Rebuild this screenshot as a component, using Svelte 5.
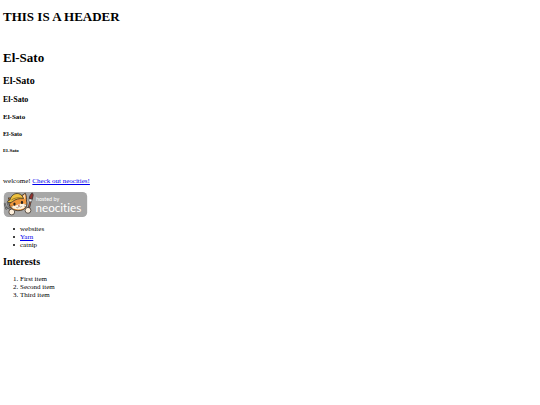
<script>
  const welcome = "welcome!";

  const likes = [
    { text: "websites" },
    { text: "Yarn", href: "#yarn" },
    { text: "catnip" },
  ];

  const interests = ["First item", "Second item", "Third item"];
</script>

<main>
  <h1 class="banner">THIS IS A HEADER</h1>

  <section class="names">
    <h1>El-Sato</h1>
    <h2>El-Sato</h2>
    <h3>El-Sato</h3>
    <h4>El-Sato</h4>
    <h5>El-Sato</h5>
    <h6>El-Sato</h6>
  </section>

  <p>{welcome} <a href="#neocities">Check out neocities!</a></p>

  <svg class="badge" viewBox="0 0 200 60" role="img" aria-label="hosted by neocities">
    <rect width="200" height="60" rx="11" fill="#a7a7a7" />

    <!-- fork -->
    <g fill="none" stroke-linecap="round" stroke-linejoin="round">
      <path d="M2 28l4 12 10-7M9 26l4 10M12 38l8 12" stroke="#333" stroke-width="4" />
      <path d="M2 28l4 12 10-7M9 26l4 10M12 38l8 12" stroke="#c9c9c9" stroke-width="1.5" />
    </g>

    <!-- brush -->
    <path d="M64 23l-6 24" stroke="#333" stroke-width="5" stroke-linecap="round" />
    <path d="M64 23l-6 24" stroke="#b85b3c" stroke-width="2" />
    <path d="M61 16l7 2 2-8c1-3 0-6-2-8-3 3-7 8-7 14z" fill="#96312d" stroke="#333" stroke-width="2" />
    <path d="M61 16l7 2-2 6-6-2z" fill="#eee" stroke="#333" stroke-width="1" />

    <!-- cat -->
    <g transform="translate(3 1) scale(0.9 1)">
      <path d="M13 26L9 13c5 0 8 2 11 5l22-9 12-7c3 6 4 13 3 19 3 8 0 15-8 20-9 4-21 4-29-1-7-4-10-8-7-14z" fill="#ef963b" stroke="#332c25" stroke-width="2" />
      <path d="M47 9l6-5c1 6 1 9-1 13z" fill="#f8d6b0" />
      <path d="M16 34c4-3 11-1 16-4 5-3 15-4 24-2 1 6-3 9-9 11-9 3-19 2-26-1-2-1-4-2-5-4z" fill="#fff3df" />
      <path d="M13 18C16 7 26 1 36 3c7 1 11 6 13 12-12-1-21 1-29 7-5 3-9 4-13 1-1-2 2-4 6-5z" fill="#edc13f" stroke="#332c25" stroke-width="2" />
      <path d="M17 18c8-5 19-7 29-4" fill="none" stroke="#8a6421" stroke-width="2" />
      <ellipse cx="25" cy="28" rx="3" ry="4" fill="#29231f" />
      <ellipse cx="45" cy="24" rx="3" ry="4" fill="#29231f" />
      <path d="M34 30l6-1-3 4z" fill="#bd493d" />
      <path d="M37 33c-1 4-5 5-7 3M37 33c2 3 6 3 8 0M12 32l8 1M13 37l7-2M51 30l7-2M51 34l7 0" fill="none" stroke="#332c25" stroke-width="1" />
    </g>

    <circle cx="19" cy="48" r="7" fill="#fff0dc" stroke="#443c35" stroke-width="2" />
    <circle cx="58" cy="44" r="7" fill="#fff0dc" stroke="#443c35" stroke-width="2" />

    <text class="lettering">
      <tspan class="hosted" x="77" y="22">hosted by</tspan>
      <tspan class="brand" x="76" y="47">neocities</tspan>
    </text>
  </svg>

  <ul>
    {#each likes as like}
      <li>
        {#if like.href}
          <a href={like.href}>{like.text}</a>
        {:else}
          {like.text}
        {/if}
      </li>
    {/each}
  </ul>

  <h2 class="interests">Interests</h2>

  <ol>
    {#each interests as item}
      <li>{item}</li>
    {/each}
  </ol>
</main>

<style>
  :global(body) {
    margin: 0;
    background: #fff;
  }

  main {
    padding: 9px 3px;
    font-family: "Liberation Serif", "Times New Roman", serif;
    font-size: 7px;
    line-height: 8px;
    color: #000;
  }

  h1,
  h2,
  h3,
  h4,
  h5,
  h6,
  p,
  ul,
  ol {
    margin: 0;
  }

  h1 {
    font-size: 13px;
    line-height: 16px;
  }

  h2 {
    font-size: 10px;
    line-height: 12px;
  }

  h3 {
    font-size: 8px;
  }

  h4 {
    font-size: 7px;
  }

  h5 {
    font-size: 6px;
  }

  h6 {
    font-size: 5px;
  }

  .banner {
    margin-bottom: 25px;
  }

  .names {
    display: flex;
    flex-direction: column;
    gap: 9px;
    margin-bottom: 22px;
  }

  a {
    color: #0000ee;
    text-decoration: underline;
  }

  .badge {
    display: block;
    width: 85px;
    height: 25px;
    margin: 7px 0 8px;
  }

  .lettering {
    font-family: Lato, "Open Sans", sans-serif;
    font-variant-ligatures: none;
    fill: #fff;
  }

  .hosted {
    font-size: 13px;
  }

  .brand {
    font-size: 28px;
  }

  ul {
    padding-left: 10px;
    list-style: none;
  }

  ul li {
    display: flex;
    align-items: center;
    gap: 5px;
  }

  ul li::before {
    content: "";
    width: 2px;
    height: 2px;
    border-radius: 50%;
    background: #000;
  }

  ol {
    padding-left: 17px;
  }

  .interests {
    margin: 7px 0;
  }
</style>
